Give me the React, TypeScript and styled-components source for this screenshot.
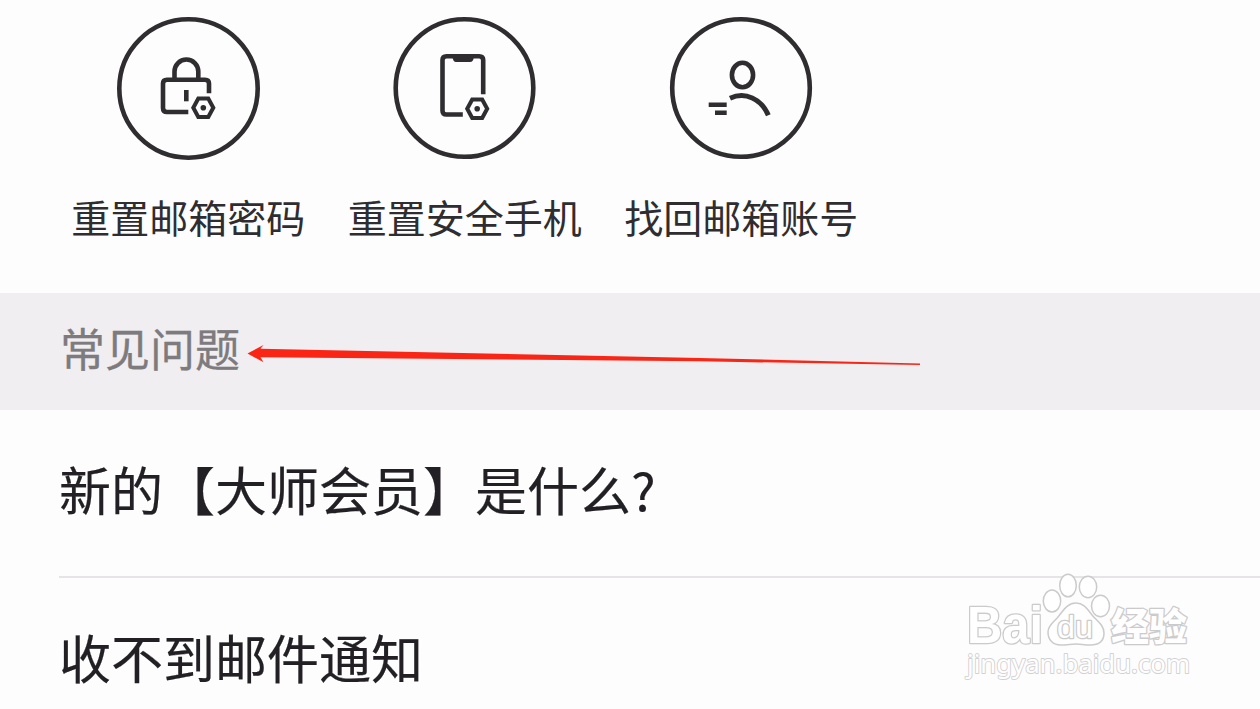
import React from 'react';
import styled, { createGlobalStyle } from 'styled-components';

const colors = {
  ink: '#2f2d30',
  title: '#222024',
  muted: '#7d7b7e',
  band: '#f0eef0',
  page: '#fdfdfd',
  divider: '#e6e4e7',
  arrow: '#fb2516',
};

const GlobalStyle = createGlobalStyle`
  body {
    margin: 0;
    background: ${colors.page};
    font-family: 'Noto Sans CJK SC', sans-serif;
  }
`;

const Page = styled.div`
  position: relative;
  width: 1260px;
  height: 709px;
  overflow: hidden;
  background: ${colors.page};
`;

const Actions = styled.nav`
  display: grid;
  grid-template-columns: repeat(3, 276.5px);
  height: 293px;
  padding: 16px 0 0 50px;
  box-sizing: border-box;
`;

const Action = styled.div`
  display: flex;
  flex-direction: column;
  align-items: center;
`;

const ActionIcon = styled.svg`
  width: 144px;
  height: 144px;
  fill: none;
  stroke: ${colors.ink};
  stroke-width: 4.6;
`;

const ActionLabel = styled.span`
  margin-top: 27px;
  font-size: 39px;
  line-height: 58px;
  color: ${colors.ink};
  white-space: nowrap;
`;

const SectionBar = styled.div`
  display: flex;
  height: 117px;
  padding: 21px 0 0 60px;
  box-sizing: border-box;
  background: ${colors.band};
`;

const SectionTitle = styled.h2`
  margin: 0;
  font-size: 45px;
  font-weight: 400;
  line-height: 68px;
  color: ${colors.muted};
  -webkit-text-stroke: 0.3px ${colors.muted};
`;

const QuestionList = styled.ul`
  margin: 0;
  padding: 0 0 0 59px;
  list-style: none;
`;

const Question = styled.li`
  height: 168px;
  padding-top: 40px;
  box-sizing: border-box;
  font-size: 52px;
  line-height: 78px;
  color: ${colors.title};
  border-bottom: 2px solid ${colors.divider};
  -webkit-text-stroke: 0.2px ${colors.title};
`;

const Arrow = styled.svg`
  position: absolute;
  left: 240px;
  top: 340px;
  width: 690px;
  height: 30px;
`;

const Watermark = styled.svg`
  position: absolute;
  left: 950px;
  top: 565px;
  width: 260px;
  height: 130px;
  fill: #fff;
  stroke: #cccbcc;
  stroke-width: 1.5;
  stroke-linejoin: round;
`;

const Lettering = styled.text<{ $weight: number; $size: number }>`
  font-family: 'Liberation Sans', 'Noto Sans CJK SC', sans-serif;
  font-weight: ${props => props.$weight};
  font-size: ${props => props.$size}px;
  stroke-width: 2.6;
  paint-order: stroke;
`;

const SiteUrl = styled.text`
  font-family: 'Noto Sans', sans-serif;
  font-size: 25px;
  stroke: #d2d1d2;
  stroke-width: 1.8;
  paint-order: stroke;
`;

const Gear = ({ x, y }: { x: number; y: number }) => (
  <g transform={`translate(${x} ${y})`}>
    <path d="M-5 -9.2H5L10 0L5 9.2H-5L-10 0Z" strokeWidth={4} />
    <circle r={2.8} fill={colors.ink} stroke="none" />
  </g>
);

const LockIcon = () => (
  <>
    <path d="M20.5 4.8V-5Q20.5 -8.8 16.5 -8.8H-21.5Q-25.5 -8.8 -25.5 -5V19.5Q-25.5 23.5 -21.5 23.5H-.2" />
    <path d="M-14 -9V-17A11.9 12 0 0 1 9.8 -17V-9" />
    <path d="M-2.2 1.5V12.8" />
    <Gear x={14.8} y={19.3} />
  </>
);

const PhoneIcon = () => (
  <>
    <path d="M18.7 6.3V-28Q18.7 -31.8 14.7 -31.8H-18Q-22 -31.8 -22 -28V22.7Q-22 26.5 -18 26.5H-1.7" />
    <path d="M-12 -31H9.3Q9 -26 5.5 -26H-8.5Q-11.5 -26 -12 -31Z" fill={colors.ink} stroke="none" />
    <Gear x={12.7} y={20.7} />
  </>
);

const PersonIcon = () => (
  <>
    <ellipse cx={1.5} cy={-13} rx={10.6} ry={12.2} />
    <path d="M-11 10.2C4 3.5 20.5 10.5 27.3 27.3" strokeWidth={5} />
    <path d="M-32.3 16.7H-14.3M-26 24.8H-14.3" />
  </>
);

// origin: viewBox origin, each drawing sits slightly differently in its column
const actions = [
  { label: '重置邮箱密码', Icon: LockIcon, origin: '-72.5 -72.5', radius: 69.2 },
  { label: '重置安全手机', Icon: PhoneIcon, origin: '-71.5 -72', radius: 68.8 },
  { label: '找回邮箱账号', Icon: PersonIcon, origin: '-72 -72', radius: 68.8 },
];

const questions = ['新的【大师会员】是什么?', '收不到邮件通知'];

const App = () => {
  return (
    <Page>
      <GlobalStyle />
      <Actions>
        {actions.map(({ label, Icon, origin, radius }) => (
          <Action key={label}>
            <ActionIcon viewBox={`${origin} 144 144`}>
              <circle r={radius} />
              <Icon />
            </ActionIcon>
            <ActionLabel>{label}</ActionLabel>
          </Action>
        ))}
      </Actions>

      <SectionBar>
        <SectionTitle>常见问题</SectionTitle>
      </SectionBar>

      <QuestionList>
        {questions.map(question => (
          <Question key={question}>{question}</Question>
        ))}
      </QuestionList>

      <Arrow viewBox="240 340 690 30">
        <path
          d="M247.5 353.5L263.5 345L260.5 348.8L700 358L920 363.5V365L700 361.3L260.5 357.3L263.5 362.3Z"
          fill={colors.arrow}
        />
      </Arrow>

      <Watermark viewBox="0 0 260 130">
        <Lettering $weight={700} $size={51} x="17" y="78" textLength="76" lengthAdjust="spacingAndGlyphs">Bai</Lettering>
        <ellipse cx="102" cy="36" rx="8.7" ry="11" />
        <ellipse cx="118" cy="20.5" rx="8.3" ry="11.3" />
        <ellipse cx="138" cy="22" rx="8.7" ry="10.8" />
        <ellipse cx="150.5" cy="41" rx="9" ry="10.8" />
        <path d="M126 38C134 38 138 45 142 50C147 56 154 60 154 68C154 78 147 80 140 80C134 80 131 79 126 79C121 79 117 80 111 80C103 80 98 75 98 67C98 60 104 57 108 52C113 46 117 38 126 38Z" />
        <Lettering $weight={400} $size={31} x="107" y="73" textLength="36" lengthAdjust="spacingAndGlyphs">du</Lettering>
        <Lettering $weight={900} $size={38} x="161" y="75">经验</Lettering>
        <SiteUrl x="17" y="108" textLength="223" lengthAdjust="spacingAndGlyphs">jingyan.baidu.com</SiteUrl>
      </Watermark>
    </Page>
  );
};

export default App;
